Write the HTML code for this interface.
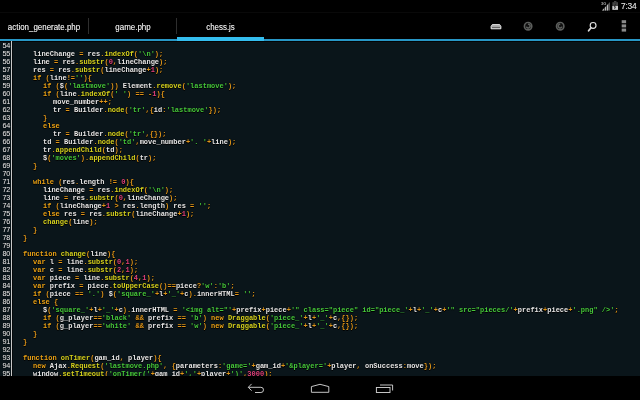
<!DOCTYPE html>
<html><head><meta charset="utf-8">
<style>
html,body{margin:0;padding:0;width:640px;height:400px;overflow:hidden;background:#000;}
body{position:relative;font-family:"Liberation Sans",sans-serif;}
#status{position:absolute;left:0;top:0;width:640px;height:12px;background:#000;border-bottom:1px solid #090909}
#clock{will-change:transform;position:absolute;left:620.5px;top:1px;font-size:8.4px;line-height:10px;color:#c8c8c8;letter-spacing:-0.25px;text-shadow:0 0 0.4px #bbb}
#ab{position:absolute;left:0;top:13px;width:640px;height:26px;background:#000}
.tab{position:absolute;top:0;height:26px;color:#dcdcdc;font-size:7.95px;text-align:center;line-height:26px;transform:translateY(1.8px) scaleY(1.08);will-change:transform;text-shadow:0 0 0.4px #bbb}
.dv{position:absolute;top:5px;width:1px;height:16px;background:#2e2e2e}
#blue{position:absolute;left:0;top:39px;width:640px;height:2px;background:#2897c6}
#sel{position:absolute;left:177px;top:37px;width:87px;height:4px;background:#34bdee}
#code{position:absolute;left:0;top:41px;width:640px;height:335px;background:#0a151a;overflow:hidden}
#inner{position:absolute;left:0;top:0px;width:640px;height:400px;will-change:transform}
.l{position:absolute;white-space:pre;font-family:"Liberation Mono",monospace;font-size:7px;line-height:8px;color:#e6e6e6;transform:translateY(0.6px) scaleY(1.12);transform-origin:0 0;text-shadow:0 0 1px #000,0 0.5px 0.5px #000;font-weight:bold}
.g{position:absolute;left:0;width:10.3px;text-align:right;white-space:pre;font-family:"Liberation Sans",sans-serif;font-size:7.3px;line-height:8px;color:#ececec;transform:translateY(0.6px) scaleY(1.08);transform-origin:0 0;text-shadow:0 0 1px #000;letter-spacing:-0.1px}
#gline{position:absolute;left:11px;top:0;width:1px;height:335px;background:#c8c8c8}
i{font-style:normal}
.k{color:#eaa216}.o{color:#e0961a}.f{color:#d6d21e}.s{color:#46c83b}.n{color:#e0407a}
#nav{position:absolute;left:0;top:376px;width:640px;height:24px;background:#000}
svg{position:absolute;overflow:visible}
</style></head><body>
<div id="status">
<svg width="640" height="13" style="left:0;top:0;will-change:transform">
  <text x="601" y="4.6" font-family="Liberation Sans" font-size="4" font-weight="bold" fill="#aaa">3G</text>
  <polygon points="602,10.6 610,2 610,10.6" fill="#555"/>
  <polygon points="602,10.6 608,4.2 608,10.6" fill="#bbb"/>
  <rect x="604" y="5" width="0.6" height="6" fill="#000"/>
  <rect x="606.2" y="3" width="0.6" height="8" fill="#000"/>
  <rect x="614" y="1.2" width="2.4" height="1" fill="#555"/>
  <rect x="612.4" y="2.2" width="5.6" height="7.6" fill="#444"/>
  <rect x="612.4" y="6" width="5.6" height="3.8" fill="#ccc"/>
  <path d="M615.8,3.5 L614.2,6.8 L615.4,6.8 L614.6,8.8" stroke="#222" stroke-width="0.9" fill="none"/>
</svg>
<div id="clock">7:34</div>
</div>
<div id="ab">
  <div class="tab" style="left:0;width:88px">action_generate.php</div>
  <div class="dv" style="left:88px"></div>
  <div class="tab" style="left:89px;width:88px">game.php</div>
  <div class="dv" style="left:176px"></div>
  <div class="tab" style="left:177px;width:87px">chess.js</div>
<svg width="640" height="26" style="left:0;top:0">
  <path d="M492.3,11.6 H499.7 L500.9,13.4 V15.8 H491.1 V13.4 Z" fill="#a8a8a8" stroke="#f0f0f0" stroke-width="0.9" stroke-linejoin="round"/>
  <rect x="492" y="14" width="8" height="0.8" fill="#555"/>
  <circle cx="528.1" cy="13.2" r="3.7" stroke="#5c5e5c" stroke-width="1.6" fill="#101010"/>
  <path d="M527.6,11.3 A1.9,1.9 0 1 1 526.4,13.6" stroke="#5c5e5c" stroke-width="1.5" fill="none"/>
  <path d="M526.4,10.6 L528.2,10.3 L527.8,12.2 Z" fill="#0e0e0e"/>
  <circle cx="560.2" cy="13.2" r="3.7" stroke="#5c5e5c" stroke-width="1.6" fill="#101010"/>
  <path d="M560.7,11.3 A1.9,1.9 0 1 0 561.9,13.6" stroke="#5c5e5c" stroke-width="1.5" fill="none"/>
  <path d="M561.9,10.6 L560.1,10.3 L560.5,12.2 Z" fill="#0e0e0e"/>
  <circle cx="593.1" cy="12.4" r="2.9" stroke="#e0e0e0" stroke-width="1.15" fill="none"/>
  <path d="M591,14.7 L588.6,17.7" stroke="#d8d8d8" stroke-width="1.8" stroke-linecap="round"/>
  <rect x="621.7" y="7.2" width="4.4" height="3" fill="#8a8a8a"/>
  <rect x="621.7" y="11.4" width="4.4" height="3" fill="#8a8a8a"/>
  <rect x="621.7" y="15.6" width="4.4" height="3" fill="#8a8a8a"/>
</svg>
</div>
<div id="blue"></div>
<div id="sel"></div>
<div id="code">
 <div id="inner">
<div class="l" style="top:-8px;left:33px"></div>
<div class="l" style="top:0px;left:33px"></div>
<div class="l" style="top:8px;left:33px">lineChange <i class="o">=</i> res<i class="o">.</i><i class="f">indexOf</i><i class="o">(</i><i class="s">&#x27;\n&#x27;</i><i class="o">)</i><i class="o">;</i></div>
<div class="l" style="top:16px;left:33px">line <i class="o">=</i> res<i class="o">.</i><i class="f">substr</i><i class="o">(</i><i class="n">0</i><i class="o">,</i>lineChange<i class="o">)</i><i class="o">;</i></div>
<div class="l" style="top:24px;left:33px">res <i class="o">=</i> res<i class="o">.</i><i class="f">substr</i><i class="o">(</i>lineChange<i class="o">+</i><i class="n">1</i><i class="o">)</i><i class="o">;</i></div>
<div class="l" style="top:32px;left:33px"><i class="k">if</i> <i class="o">(</i>line<i class="o">!</i><i class="o">=</i><i class="s">&#x27;&#x27;</i><i class="o">)</i><i class="o">{</i></div>
<div class="l" style="top:40px;left:43px"><i class="k">if</i> <i class="o">(</i>$<i class="o">(</i><i class="s">&#x27;lastmove&#x27;</i><i class="o">)</i><i class="o">)</i> Element<i class="o">.</i><i class="f">remove</i><i class="o">(</i><i class="s">&#x27;lastmove&#x27;</i><i class="o">)</i><i class="o">;</i></div>
<div class="l" style="top:48px;left:43px"><i class="k">if</i> <i class="o">(</i>line<i class="o">.</i><i class="f">indexOf</i><i class="o">(</i><i class="s">&#x27; &#x27;</i><i class="o">)</i> <i class="o">=</i><i class="o">=</i> <i class="o">-</i><i class="n">1</i><i class="o">)</i><i class="o">{</i></div>
<div class="l" style="top:56px;left:53px">move_number<i class="o">+</i><i class="o">+</i><i class="o">;</i></div>
<div class="l" style="top:64px;left:53px">tr <i class="o">=</i> Builder<i class="o">.</i><i class="f">node</i><i class="o">(</i><i class="s">&#x27;tr&#x27;</i><i class="o">,</i><i class="o">{</i>id<i class="o">:</i><i class="s">&#x27;lastmove&#x27;</i><i class="o">}</i><i class="o">)</i><i class="o">;</i></div>
<div class="l" style="top:72px;left:43px"><i class="o">}</i></div>
<div class="l" style="top:80px;left:43px"><i class="k">else</i></div>
<div class="l" style="top:88px;left:53px">tr <i class="o">=</i> Builder<i class="o">.</i><i class="f">node</i><i class="o">(</i><i class="s">&#x27;tr&#x27;</i><i class="o">,</i><i class="o">{</i><i class="o">}</i><i class="o">)</i><i class="o">;</i></div>
<div class="l" style="top:96px;left:43px">td <i class="o">=</i> Builder<i class="o">.</i><i class="f">node</i><i class="o">(</i><i class="s">&#x27;td&#x27;</i><i class="o">,</i>move_number<i class="o">+</i><i class="s">&#x27;. &#x27;</i><i class="o">+</i>line<i class="o">)</i><i class="o">;</i></div>
<div class="l" style="top:104px;left:43px">tr<i class="o">.</i><i class="f">appendChild</i><i class="o">(</i>td<i class="o">)</i><i class="o">;</i></div>
<div class="l" style="top:112px;left:43px">$<i class="o">(</i><i class="s">&#x27;moves&#x27;</i><i class="o">)</i><i class="o">.</i><i class="f">appendChild</i><i class="o">(</i>tr<i class="o">)</i><i class="o">;</i></div>
<div class="l" style="top:120px;left:33px"><i class="o">}</i></div>
<div class="l" style="top:128px;left:33px"></div>
<div class="l" style="top:136px;left:33px"><i class="k">while</i> <i class="o">(</i>res<i class="o">.</i>length <i class="o">!</i><i class="o">=</i> <i class="n">0</i><i class="o">)</i><i class="o">{</i></div>
<div class="l" style="top:144px;left:43px">lineChange <i class="o">=</i> res<i class="o">.</i><i class="f">indexOf</i><i class="o">(</i><i class="s">&#x27;\n&#x27;</i><i class="o">)</i><i class="o">;</i></div>
<div class="l" style="top:152px;left:43px">line <i class="o">=</i> res<i class="o">.</i><i class="f">substr</i><i class="o">(</i><i class="n">0</i><i class="o">,</i>lineChange<i class="o">)</i><i class="o">;</i></div>
<div class="l" style="top:160px;left:43px"><i class="k">if</i> <i class="o">(</i>lineChange<i class="o">+</i><i class="n">1</i> <i class="o">&gt;</i> res<i class="o">.</i>length<i class="o">)</i> res <i class="o">=</i> <i class="s">&#x27;&#x27;</i><i class="o">;</i></div>
<div class="l" style="top:168px;left:43px"><i class="k">else</i> res <i class="o">=</i> res<i class="o">.</i><i class="f">substr</i><i class="o">(</i>lineChange<i class="o">+</i><i class="n">1</i><i class="o">)</i><i class="o">;</i></div>
<div class="l" style="top:176px;left:43px"><i class="f">change</i><i class="o">(</i>line<i class="o">)</i><i class="o">;</i></div>
<div class="l" style="top:184px;left:33px"><i class="o">}</i></div>
<div class="l" style="top:192px;left:23px"><i class="o">}</i></div>
<div class="l" style="top:200px;left:23px"></div>
<div class="l" style="top:208px;left:23px"><i class="k">function</i> <i class="f">change</i><i class="o">(</i>line<i class="o">)</i><i class="o">{</i></div>
<div class="l" style="top:216px;left:33px"><i class="k">var</i> l <i class="o">=</i> line<i class="o">.</i><i class="f">substr</i><i class="o">(</i><i class="n">0</i><i class="o">,</i><i class="n">1</i><i class="o">)</i><i class="o">;</i></div>
<div class="l" style="top:224px;left:33px"><i class="k">var</i> c <i class="o">=</i> line<i class="o">.</i><i class="f">substr</i><i class="o">(</i><i class="n">2</i><i class="o">,</i><i class="n">1</i><i class="o">)</i><i class="o">;</i></div>
<div class="l" style="top:232px;left:33px"><i class="k">var</i> piece <i class="o">=</i> line<i class="o">.</i><i class="f">substr</i><i class="o">(</i><i class="n">4</i><i class="o">,</i><i class="n">1</i><i class="o">)</i><i class="o">;</i></div>
<div class="l" style="top:240px;left:33px"><i class="k">var</i> prefix <i class="o">=</i> piece<i class="o">.</i><i class="f">toUpperCase</i><i class="o">(</i><i class="o">)</i><i class="o">=</i><i class="o">=</i>piece<i class="o">?</i><i class="s">&#x27;w&#x27;</i><i class="o">:</i><i class="s">&#x27;b&#x27;</i><i class="o">;</i></div>
<div class="l" style="top:248px;left:33px"><i class="k">if</i> <i class="o">(</i>piece <i class="o">=</i><i class="o">=</i> <i class="s">&#x27;.&#x27;</i><i class="o">)</i> $<i class="o">(</i><i class="s">&#x27;square_&#x27;</i><i class="o">+</i>l<i class="o">+</i><i class="s">&#x27;_&#x27;</i><i class="o">+</i>c<i class="o">)</i><i class="o">.</i>innerHTML<i class="o">=</i> <i class="s">&#x27;&#x27;</i><i class="o">;</i></div>
<div class="l" style="top:256px;left:33px"><i class="k">else</i> <i class="o">{</i></div>
<div class="l" style="top:264px;left:43px">$<i class="o">(</i><i class="s">&#x27;square_&#x27;</i><i class="o">+</i>l<i class="o">+</i><i class="s">&#x27;_&#x27;</i><i class="o">+</i>c<i class="o">)</i><i class="o">.</i>innerHTML <i class="o">=</i> <i class="s">&#x27;&lt;img alt=&quot;&#x27;</i><i class="o">+</i>prefix<i class="o">+</i>piece<i class="o">+</i><i class="s">&#x27;&quot; class=&quot;piece&quot; id=&quot;piece_&#x27;</i><i class="o">+</i>l<i class="o">+</i><i class="s">&#x27;_&#x27;</i><i class="o">+</i>c<i class="o">+</i><i class="s">&#x27;&quot; src=&quot;pieces/&#x27;</i><i class="o">+</i>prefix<i class="o">+</i>piece<i class="o">+</i><i class="s">&#x27;.png&quot; /&gt;&#x27;</i><i class="o">;</i></div>
<div class="l" style="top:272px;left:43px"><i class="k">if</i> <i class="o">(</i>g_player<i class="o">=</i><i class="o">=</i><i class="s">&#x27;black&#x27;</i> <i class="o">&amp;</i><i class="o">&amp;</i> prefix <i class="o">=</i><i class="o">=</i> <i class="s">&#x27;b&#x27;</i><i class="o">)</i> <i class="k">new</i> <i class="f">Draggable</i><i class="o">(</i><i class="s">&#x27;piece_&#x27;</i><i class="o">+</i>l<i class="o">+</i><i class="s">&#x27;_&#x27;</i><i class="o">+</i>c<i class="o">,</i><i class="o">{</i><i class="o">}</i><i class="o">)</i><i class="o">;</i></div>
<div class="l" style="top:280px;left:43px"><i class="k">if</i> <i class="o">(</i>g_player<i class="o">=</i><i class="o">=</i><i class="s">&#x27;white&#x27;</i> <i class="o">&amp;</i><i class="o">&amp;</i> prefix <i class="o">=</i><i class="o">=</i> <i class="s">&#x27;w&#x27;</i><i class="o">)</i> <i class="k">new</i> <i class="f">Draggable</i><i class="o">(</i><i class="s">&#x27;piece_&#x27;</i><i class="o">+</i>l<i class="o">+</i><i class="s">&#x27;_&#x27;</i><i class="o">+</i>c<i class="o">,</i><i class="o">{</i><i class="o">}</i><i class="o">)</i><i class="o">;</i></div>
<div class="l" style="top:288px;left:33px"><i class="o">}</i></div>
<div class="l" style="top:296px;left:23px"><i class="o">}</i></div>
<div class="l" style="top:304px;left:23px"></div>
<div class="l" style="top:312px;left:23px"><i class="k">function</i> <i class="f">onTimer</i><i class="o">(</i>gam_id<i class="o">,</i> player<i class="o">)</i><i class="o">{</i></div>
<div class="l" style="top:320px;left:33px"><i class="k">new</i> Ajax<i class="o">.</i><i class="f">Request</i><i class="o">(</i><i class="s">&#x27;lastmove.php&#x27;</i><i class="o">,</i> <i class="o">{</i>parameters<i class="o">:</i><i class="s">&#x27;game=&#x27;</i><i class="o">+</i>gam_id<i class="o">+</i><i class="s">&#x27;&amp;player=&#x27;</i><i class="o">+</i>player<i class="o">,</i> onSuccess<i class="o">:</i>move<i class="o">}</i><i class="o">)</i><i class="o">;</i></div>
<div class="l" style="top:328px;left:33px">window<i class="o">.</i><i class="f">setTimeout</i><i class="o">(</i><i class="s">&#x27;onTimer(&#x27;</i><i class="o">+</i>gam_id<i class="o">+</i><i class="s">&#x27;,&#x27;</i><i class="o">+</i>player<i class="o">+</i><i class="s">&#x27;)&#x27;</i><i class="o">,</i><i class="n">3000</i><i class="o">)</i><i class="o">;</i></div>
<div class="g" style="top:0px">54</div>
<div class="g" style="top:8px">55</div>
<div class="g" style="top:16px">56</div>
<div class="g" style="top:24px">57</div>
<div class="g" style="top:32px">58</div>
<div class="g" style="top:40px">59</div>
<div class="g" style="top:48px">60</div>
<div class="g" style="top:56px">61</div>
<div class="g" style="top:64px">62</div>
<div class="g" style="top:72px">63</div>
<div class="g" style="top:80px">64</div>
<div class="g" style="top:88px">65</div>
<div class="g" style="top:96px">66</div>
<div class="g" style="top:104px">67</div>
<div class="g" style="top:112px">68</div>
<div class="g" style="top:120px">69</div>
<div class="g" style="top:128px">70</div>
<div class="g" style="top:136px">71</div>
<div class="g" style="top:144px">72</div>
<div class="g" style="top:152px">73</div>
<div class="g" style="top:160px">74</div>
<div class="g" style="top:168px">75</div>
<div class="g" style="top:176px">76</div>
<div class="g" style="top:184px">77</div>
<div class="g" style="top:192px">78</div>
<div class="g" style="top:200px">79</div>
<div class="g" style="top:208px">80</div>
<div class="g" style="top:216px">81</div>
<div class="g" style="top:224px">82</div>
<div class="g" style="top:232px">83</div>
<div class="g" style="top:240px">84</div>
<div class="g" style="top:248px">85</div>
<div class="g" style="top:256px">86</div>
<div class="g" style="top:264px">87</div>
<div class="g" style="top:272px">88</div>
<div class="g" style="top:280px">89</div>
<div class="g" style="top:288px">90</div>
<div class="g" style="top:296px">91</div>
<div class="g" style="top:304px">92</div>
<div class="g" style="top:312px">93</div>
<div class="g" style="top:320px">94</div>
<div class="g" style="top:328px">95</div>
<div style="position:absolute;left:92px;top:0;width:3px;height:1px;background:#9aa0a0"></div>
<div style="position:absolute;left:108.5px;top:0;width:2px;height:1px;background:#8a8a20"></div>
<div style="position:absolute;left:121.5px;top:0;width:2px;height:1px;background:#8a8a20"></div>
<div style="position:absolute;left:127px;top:0;width:2px;height:1px;background:#7a5a20"></div>

 </div>
 <div style="position:absolute;left:0;top:0;width:640px;height:1px;background:#020405"></div>
 <div style="position:absolute;left:12px;top:0;width:1px;height:335px;background:#05090b"></div>
 <div id="gline"></div>
</div>
<div id="nav">
<svg width="640" height="24" style="left:0;top:0">
  <path d="M251.6,7.9 L248.3,11.3 L251.6,14.7 M248.3,11.3 H260.9 A2.6,2.6 0 0 1 260.9,16.5 H255" stroke="#cfcfcf" stroke-width="0.95" fill="none"/>
  <path d="M311.4,16.3 V10.6 L320,8.3 L328.8,10.6 V16.3 Z" stroke="#cfcfcf" stroke-width="0.95" fill="none" stroke-linejoin="round"/>
  <rect x="376.4" y="11.5" width="13.6" height="5" stroke="#cfcfcf" stroke-width="0.95" fill="none"/>
  <path d="M380,9 H392.6 V14.5" stroke="#cfcfcf" stroke-width="0.95" fill="none"/>
</svg>
</div>
</body></html>
